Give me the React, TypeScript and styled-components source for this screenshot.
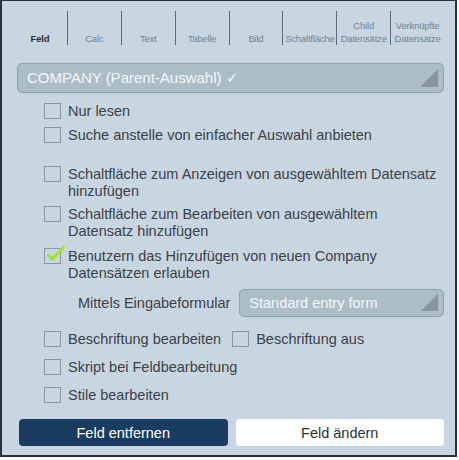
import React from 'react';
import styled, { createGlobalStyle } from 'styled-components';

const GlobalStyle = createGlobalStyle`
    html, body {
        margin: 0;
        padding: 0;
        background: #ffffff;
    }
    * {
        box-sizing: border-box;
    }
`;

const colors = {
    panel: '#c8d6e1',
    frame: '#2a3038',
    text: '#3b4148',
    tabText: '#6f8497',
    select: '#abbec8',
    selectBorder: '#8ea1ac',
    arrow: '#87959d',
    box: '#8c969d',
    navy: '#1a3c60',
};

const Panel = styled.div`
    width: 457px;
    height: 457px;
    background: ${colors.panel};
    border: 2px solid ${colors.frame};
    border-top-width: 1px;
    padding: 10px 11px 0 15px;
    font-family: "Liberation Sans", Arial, sans-serif;
    color: ${colors.text};
    display: flex;
    flex-direction: column;
`;

const TabBar = styled.div`
    display: flex;
    height: 34px;
    margin-left: -4px;
`;

const Tab = styled.div<{ $active?: boolean; $first?: boolean }>`
    width: 54px;
    display: flex;
    flex-direction: column;
    justify-content: flex-end;
    align-items: center;
    text-align: center;
    font-size: 9.5px;
    line-height: 13px;
    white-space: nowrap;
    letter-spacing: -0.2px;
    color: ${p => (p.$active ? '#2c3035' : colors.tabText)};
    font-weight: ${p => (p.$active ? 'bold' : 'normal')};
    border-left: ${p => (p.$first ? 'none' : '1px solid #5d6d7b')};
`;

const Select = styled.div<{ $height: number; $size: number }>`
    position: relative;
    height: ${p => p.$height}px;
    background: ${colors.select};
    border: 1px solid ${colors.selectBorder};
    border-radius: 5px;
    color: #f4f7f9;
    font-size: ${p => p.$size}px;
    display: flex;
    align-items: center;
    padding-left: 9px;
    flex: 1;
`;

const Arrow = styled.div<{ $size: number }>`
    position: absolute;
    right: 5px;
    bottom: 5px;
    width: 0;
    height: 0;
    border-style: solid;
    border-width: 0 0 ${p => p.$size}px ${p => p.$size}px;
    border-color: transparent transparent ${colors.arrow} transparent;
`;

const MainSelect = styled(Select)`
    margin-top: 18px;
    flex: none;
`;

const Options = styled.div`
    display: flex;
    flex-direction: column;
    padding-left: 27px;
    font-size: 14.5px;
    line-height: 17px;
`;

const Row = styled.div<{ $gap: number }>`
    display: flex;
    align-items: flex-start;
    margin-top: ${p => p.$gap}px;
`;

const Box = styled.span`
    position: relative;
    flex: none;
    width: 17px;
    height: 16px;
    margin-right: 7px;
    border: 1px solid ${colors.box};
`;

const Tick = styled.svg`
    position: absolute;
    left: 2px;
    top: -3px;
`;

const Label = styled.span`
    flex: 1;
`;

const FormRow = styled.div`
    display: flex;
    align-items: center;
    margin-top: 7px;
    margin-left: 34px;
    gap: 9px;
`;

const Pair = styled.div`
    display: flex;
    align-items: flex-start;
    margin-right: 11px;
`;

const Buttons = styled.div`
    display: flex;
    gap: 8px;
    margin-top: 15px;
    margin-left: 2px;
`;

const Button = styled.div<{ $primary?: boolean }>`
    width: 210px;
    height: 27px;
    border-radius: 4px;
    display: flex;
    align-items: center;
    justify-content: center;
    font-size: 14.5px;
    background: ${p => (p.$primary ? colors.navy : '#ffffff')};
    color: ${p => (p.$primary ? '#ffffff' : '#2b3138')};
`;

const tabs = ['Feld', 'Calc', 'Text', 'Tabelle', 'Bild', 'Schaltfläche', 'Child\nDatensätze', 'Verknüpfte\nDatensätze'];

const Check = ({ checked }: { checked?: boolean }) => (
    <Box>
        {checked && (
            <Tick width="18" height="16" viewBox="0 0 18 16">
                <path d="M1.5 9 L5.5 13 L16.5 1.5" fill="none" stroke="#a2e51b" strokeWidth="3" strokeLinecap="round" strokeLinejoin="round" />
            </Tick>
        )}
    </Box>
);

const Option = ({ gap, checked, children }: { gap: number; checked?: boolean; children: React.ReactNode }) => (
    <Row $gap={gap}>
        <Check checked={checked} />
        <Label>{children}</Label>
    </Row>
);

const App = () => {
    return (
        <>
            <GlobalStyle />
            <Panel>
                <TabBar>
                    {tabs.map((t, i) => (
                        <Tab key={t} $active={i === 0} $first={i === 0}>
                            {t.split('\n').map(line => <div key={line}>{line}</div>)}
                        </Tab>
                    ))}
                </TabBar>
                <MainSelect $height={30} $size={15}>
                    COMPANY (Parent-Auswahl) ✓
                    <Arrow $size={18} />
                </MainSelect>
                <Options>
                    <Option gap={10}>Nur lesen</Option>
                    <Option gap={7}>Suche anstelle von einfacher Auswahl anbieten</Option>
                    <Option gap={22}>Schaltfläche zum Anzeigen von ausgewähltem Datensatz hinzufügen</Option>
                    <Option gap={6}>Schaltfläche zum Bearbeiten von ausgewähltem Datensatz hinzufügen</Option>
                    <Option gap={8} checked>Benutzern das Hinzufügen von neuen Company Datensätzen erlauben</Option>
                    <FormRow>
                        <span>Mittels Eingabeformular</span>
                        <Select $height={28} $size={14.5}>
                            Standard entry form
                            <Arrow $size={17} />
                        </Select>
                    </FormRow>
                    <Row $gap={14}>
                        <Pair>
                            <Check />
                            <span>Beschriftung bearbeiten</span>
                        </Pair>
                        <Pair>
                            <Check />
                            <span>Beschriftung aus</span>
                        </Pair>
                    </Row>
                    <Option gap={11}>Skript bei Feldbearbeitung</Option>
                    <Option gap={11}>Stile bearbeiten</Option>
                </Options>
                <Buttons>
                    <Button $primary>Feld entfernen</Button>
                    <Button>Feld ändern</Button>
                </Buttons>
            </Panel>
        </>
    );
};

export default App;
